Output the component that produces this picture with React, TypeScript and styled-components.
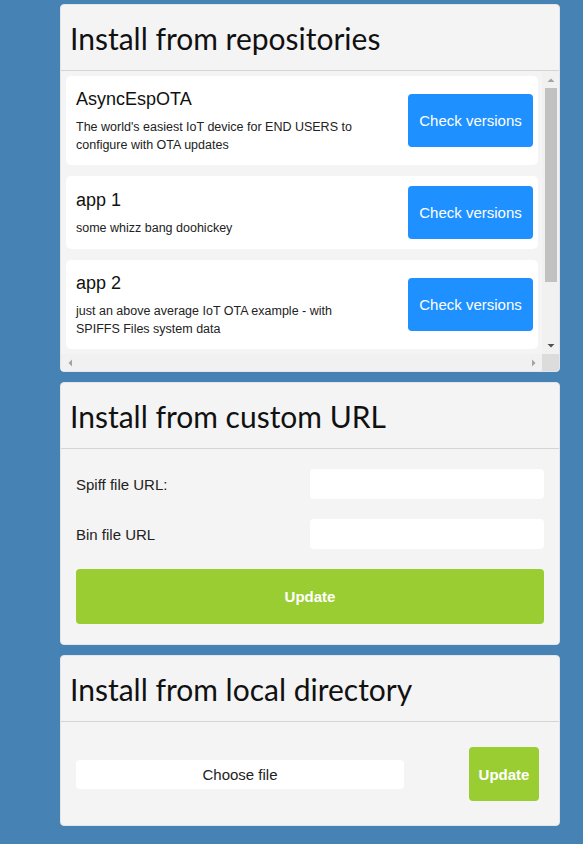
import React from "react";
import styled, { createGlobalStyle } from "styled-components";

const GlobalStyle = createGlobalStyle`
  html, body {
    margin: 0;
    padding: 0;
    background: #4682b4;
  }
  body {
    font-family: "Liberation Sans", Arial, sans-serif;
    color: #111;
  }
`;

const Page = styled.div`
  display: flex;
  flex-direction: column;
  gap: 10px;
  width: 500px;
  padding: 4px 0 20px 60px;
`;

const Card = styled.section`
  background: #f4f4f4;
  border: 1px solid #e2e6ea;
  border-radius: 4px;
  overflow: hidden;
`;

const CardHeader = styled.header`
  height: 65px;
  border-bottom: 1px solid #d4d4d4;
  display: flex;
  align-items: center;
  padding: 0 9px;
`;

const Title = styled.h2`
  margin: 0;
  font-family: Lato, "Open Sans", sans-serif;
  font-weight: 400;
  font-size: 30px;
  color: #111;
  line-height: 1;
  padding-top: 1px;
`;

/* Scroll frame: a grid of viewport, vertical bar, horizontal bar and corner */
const ScrollFrame = styled.div`
  display: grid;
  grid-template-columns: 1fr 17px;
  grid-template-rows: 283px 17px;
  background: #f4f4f4;
`;

const Viewport = styled.div`
  overflow: hidden;
`;

const VBar = styled.div`
  display: flex;
  flex-direction: column;
  background: #f1f1f1;
`;

const HBar = styled.div`
  display: flex;
  flex-direction: row;
  background: #f1f1f1;
`;

const Corner = styled.div`
  background: #dcdcdc;
`;

const BarButton = styled.div`
  width: 17px;
  height: 17px;
  flex-shrink: 0;
  display: flex;
  align-items: center;
  justify-content: center;
`;

const VTrack = styled.div`
  flex: 1;
  display: flex;
  flex-direction: column;
  padding: 0 2px 0 3px;
`;

const HTrack = styled.div`
  flex: 1;
`;

const VThumb = styled.div<{ $size: number }>`
  height: ${(p) => p.$size}%;
  background: #c1c1c1;
`;

type Dir = "up" | "down" | "left" | "right";
const arrowPoints: Record<Dir, string> = {
  up: "1.5,7 8.5,7 5,3.5",
  down: "1.5,3 8.5,3 5,6.5",
  left: "7,1.5 7,8.5 3.5,5",
  right: "3,1.5 3,8.5 6.5,5",
};

const Arrow = ({ dir, active }: { dir: Dir; active?: boolean }) => (
  <svg width="10" height="10" viewBox="0 0 10 10">
    <polygon points={arrowPoints[dir]} fill={active ? "#505050" : "#a3a3a3"} />
  </svg>
);

const RepoList = styled.div`
  display: flex;
  flex-direction: column;
  gap: 11px;
  padding: 5px 4px 5px 5px;
`;

const RepoItem = styled.div`
  background: #fff;
  border-radius: 5px;
  display: flex;
  align-items: center;
  justify-content: space-between;
  padding: 10px 5px 10px 10px;
`;

const RepoInfo = styled.div`
  display: flex;
  flex-direction: column;
  gap: 8px;
  width: 290px;
  padding: 2px 0 1px;
`;

const RepoName = styled.h3`
  margin: 0;
  font-size: 18px;
  font-weight: 400;
  line-height: 22px;
  color: #111;
`;

const RepoDesc = styled.p`
  margin: 0;
  font-size: 12.5px;
  line-height: 18px;
  color: #222;
`;

const BlueButton = styled.button`
  width: 125px;
  height: 53px;
  border: none;
  border-radius: 4px;
  background: #1e90ff;
  color: #fff;
  font-family: "Liberation Sans", Arial, sans-serif;
  font-size: 15px;
  flex-shrink: 0;
  cursor: pointer;
`;

const FormBody = styled.div`
  display: flex;
  flex-direction: column;
  gap: 20px;
  padding: 20px 15px 20px 15px;
`;

const FieldRow = styled.div`
  display: grid;
  grid-template-columns: 1fr 234px;
  align-items: center;
`;

const Label = styled.label`
  font-size: 15px;
  color: #222;
`;

const TextInput = styled.input`
  height: 30px;
  border: none;
  border-radius: 4px;
  background: #fff;
  padding: 0 8px;
  box-sizing: border-box;
  width: 100%;
  font-family: "Liberation Sans", Arial, sans-serif;
  outline: none;
`;

const GreenButton = styled.button<{ $wide?: boolean }>`
  border: none;
  border-radius: 4px;
  background: #9acd32;
  color: #fff;
  font-family: "Liberation Sans", Arial, sans-serif;
  font-weight: 700;
  font-size: 15px;
  height: ${(p) => (p.$wide ? "55px" : "54px")};
  width: ${(p) => (p.$wide ? "100%" : "70px")};
  flex-shrink: 0;
  cursor: pointer;
`;

const LocalBody = styled.div`
  display: flex;
  align-items: center;
  justify-content: space-between;
  padding: 25px 20px 24px 15px;
`;

const FileBox = styled.label`
  width: 328px;
  height: 29px;
  background: #fff;
  border-radius: 4px;
  display: flex;
  align-items: center;
  justify-content: center;
  font-size: 15px;
  color: #222;
  cursor: pointer;
`;

const repos = [
  {
    name: "AsyncEspOTA",
    desc: "The world's easiest IoT device for END USERS to configure with OTA updates",
  },
  { name: "app 1", desc: "some whizz bang doohickey" },
  {
    name: "app 2",
    desc: "just an above average IoT OTA example - with SPIFFS Files system data",
  },
];

export default function App() {
  return (
    <>
      <GlobalStyle />
      <Page>
        <Card>
          <CardHeader>
            <Title>Install from repositories</Title>
          </CardHeader>
          <ScrollFrame>
            <Viewport>
              <RepoList>
                {repos.map((r) => (
                  <RepoItem key={r.name}>
                    <RepoInfo>
                      <RepoName>{r.name}</RepoName>
                      <RepoDesc>{r.desc}</RepoDesc>
                    </RepoInfo>
                    <BlueButton>Check versions</BlueButton>
                  </RepoItem>
                ))}
              </RepoList>
            </Viewport>
            <VBar>
              <BarButton>
                <Arrow dir="up" />
              </BarButton>
              <VTrack>
                <VThumb $size={78} />
              </VTrack>
              <BarButton>
                <Arrow dir="down" active />
              </BarButton>
            </VBar>
            <HBar>
              <BarButton>
                <Arrow dir="left" />
              </BarButton>
              <HTrack />
              <BarButton>
                <Arrow dir="right" />
              </BarButton>
            </HBar>
            <Corner />
          </ScrollFrame>
        </Card>

        <Card>
          <CardHeader>
            <Title>Install from custom URL</Title>
          </CardHeader>
          <FormBody>
            <FieldRow>
              <Label>Spiff file URL:</Label>
              <TextInput type="text" />
            </FieldRow>
            <FieldRow>
              <Label>Bin file URL</Label>
              <TextInput type="text" />
            </FieldRow>
            <GreenButton $wide>Update</GreenButton>
          </FormBody>
        </Card>

        <Card>
          <CardHeader>
            <Title>Install from local directory</Title>
          </CardHeader>
          <LocalBody>
            <FileBox>Choose file</FileBox>
            <GreenButton>Update</GreenButton>
          </LocalBody>
        </Card>
      </Page>
    </>
  );
}
